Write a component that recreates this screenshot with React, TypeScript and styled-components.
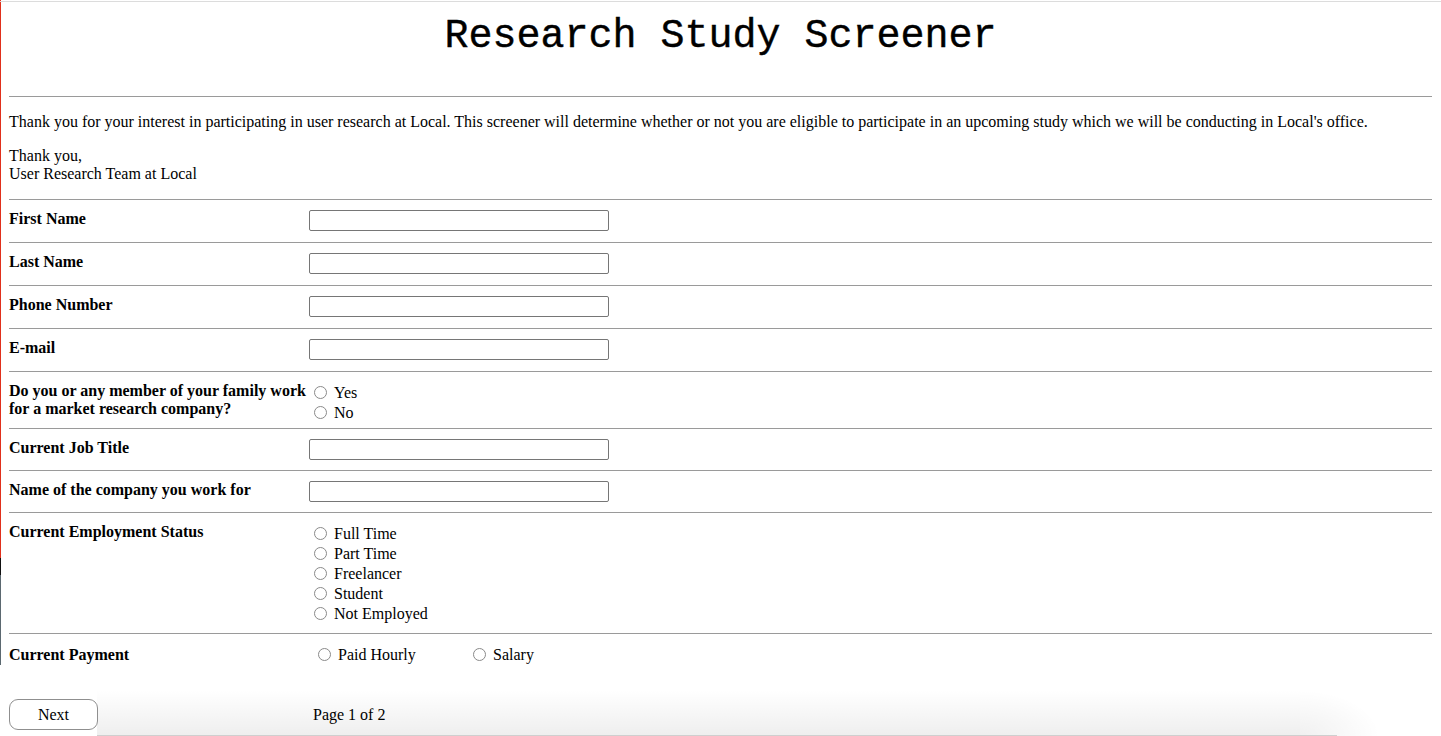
import styled, { createGlobalStyle } from 'styled-components';

const GlobalStyle = createGlobalStyle`
  html {
    background:
      linear-gradient(#dcdcdc, #dcdcdc) 0 1px / 100% 1px no-repeat,
      linear-gradient(to bottom, #e0301c 0 558px, #111 558px 575px, #5b6870 575px 665px, transparent 665px) 0 0 / 1px 736px no-repeat,
      linear-gradient(#cfcfcf, #cfcfcf) 97px 735px / 1240px 1px no-repeat,
      radial-gradient(ellipse 80px 46px at 0 100%, rgba(0, 0, 0, 0.06), rgba(0, 0, 0, 0)) 1300px 690px / 80px 46px no-repeat,
      linear-gradient(to bottom, rgba(0, 0, 0, 0), rgba(0, 0, 0, 0.065)) 97px 690px / 1203px 46px no-repeat,
      #fff;
    min-height: 100%;
  }

  body {
    margin: 0;
    font-family: 'Liberation Serif', 'Times New Roman', serif;
    font-size: 16px;
    color: #000;
  }
`;

const Page = styled.div`
  padding: 2px 9px 0 9px;
`;

const Title = styled.h1`
  margin: 0;
  padding-top: 12px;
  height: 82px;
  text-align: center;
  font-family: 'Liberation Mono', 'Courier New', monospace;
  font-weight: 400;
  font-size: 40px;
  line-height: 45px;
  -webkit-text-stroke: 0.4px #000;
`;

const Intro = styled.div`
  border-top: 1px solid #9a9a9a;
  padding: 16px 0;

  p {
    margin: 0;
  }

  p + p {
    margin-top: 16px;
  }
`;

const Row = styled.div<{ $top?: number; $bottom?: number }>`
  display: flex;
  align-items: flex-start;
  border-top: 1px solid #9a9a9a;
  padding-top: ${(p) => p.$top ?? 10}px;
  padding-bottom: ${(p) => p.$bottom ?? 11}px;
`;

const Label = styled.label<{ $shift?: number }>`
  flex: 0 0 300px;
  padding-top: ${(p) => p.$shift ?? 0}px;
  font-weight: 700;
  line-height: 18px;
  white-space: nowrap;
`;

const TextInput = styled.input`
  width: 300px;
  height: 21px;
  box-sizing: border-box;
  margin: 0;
  border: 1px solid #767676;
  border-radius: 2px;
  background: #fff;
  font: inherit;
`;

const Options = styled.div<{ $inline?: boolean }>`
  display: flex;
  flex-direction: ${(p) => (p.$inline ? 'row' : 'column')};
`;

const Option = styled.label<{ $width?: number; $indent?: number }>`
  display: flex;
  align-items: center;
  box-sizing: border-box;
  height: 20px;
  width: ${(p) => (p.$width ? `${p.$width}px` : 'auto')};
  padding-left: ${(p) => p.$indent ?? 5}px;
  line-height: 20px;

  span {
    padding-top: 2px;
  }
`;

const Radio = styled.input.attrs({ type: 'radio' })`
  appearance: none;
  width: 13px;
  height: 13px;
  margin: 0 7px 0 0;
  border: 1px solid #8a8a8a;
  border-radius: 50%;
  background: #fff;
  box-sizing: border-box;
  flex: none;
`;

const Footer = styled.div`
  display: flex;
  align-items: center;
  margin-top: 25px;
`;

const NextButton = styled.button`
  width: 89px;
  height: 31px;
  margin-right: 215px;
  border: 1px solid #8f8f8f;
  border-radius: 9px;
  background: #fff;
  font-family: 'Liberation Serif', 'Times New Roman', serif;
  font-size: 16px;
  color: #000;
`;

const PageCount = styled.span`
  padding-top: 1px;
`;

const textFields = ['First Name', 'Last Name', 'Phone Number', 'E-mail'];
const employment = ['Full Time', 'Part Time', 'Freelancer', 'Student', 'Not Employed'];

export default function App() {
  return (
    <>
      <GlobalStyle />
      <Page>
        <Title>Research Study Screener</Title>
        <Intro>
          <p>
            Thank you for your interest in participating in user research at Local. This screener will determine whether or
            not you are eligible to participate in an upcoming study which we will be conducting in Local's office.
          </p>
          <p>
            Thank you,
            <br />
            User Research Team at Local
          </p>
        </Intro>

        {textFields.map((name) => (
          <Row key={name}>
            <Label>{name}</Label>
            <TextInput type="text" />
          </Row>
        ))}

        <Row $bottom={6}>
          <Label>
            Do you or any member of your family work
            <br />
            for a market research company?
          </Label>
          <Options>
            <Option>
              <Radio name="market" />
              <span>Yes</span>
            </Option>
            <Option>
              <Radio name="market" />
              <span>No</span>
            </Option>
          </Options>
        </Row>

        <Row $bottom={10}>
          <Label>Current Job Title</Label>
          <TextInput type="text" />
        </Row>
        <Row $bottom={10}>
          <Label>Name of the company you work for</Label>
          <TextInput type="text" />
        </Row>

        <Row $bottom={10}>
          <Label>Current Employment Status</Label>
          <Options>
            {employment.map((item) => (
              <Option key={item}>
                <Radio name="employment" />
                <span>{item}</span>
              </Option>
            ))}
          </Options>
        </Row>

        <Row $bottom={10}>
          <Label $shift={2}>Current Payment</Label>
          <Options $inline>
            <Option $width={159} $indent={9}>
              <Radio name="payment" />
              <span>Paid Hourly</span>
            </Option>
            <Option>
              <Radio name="payment" />
              <span>Salary</span>
            </Option>
          </Options>
        </Row>

        <Footer>
          <NextButton type="button">Next</NextButton>
          <PageCount>Page 1 of 2</PageCount>
        </Footer>
      </Page>
    </>
  );
}
